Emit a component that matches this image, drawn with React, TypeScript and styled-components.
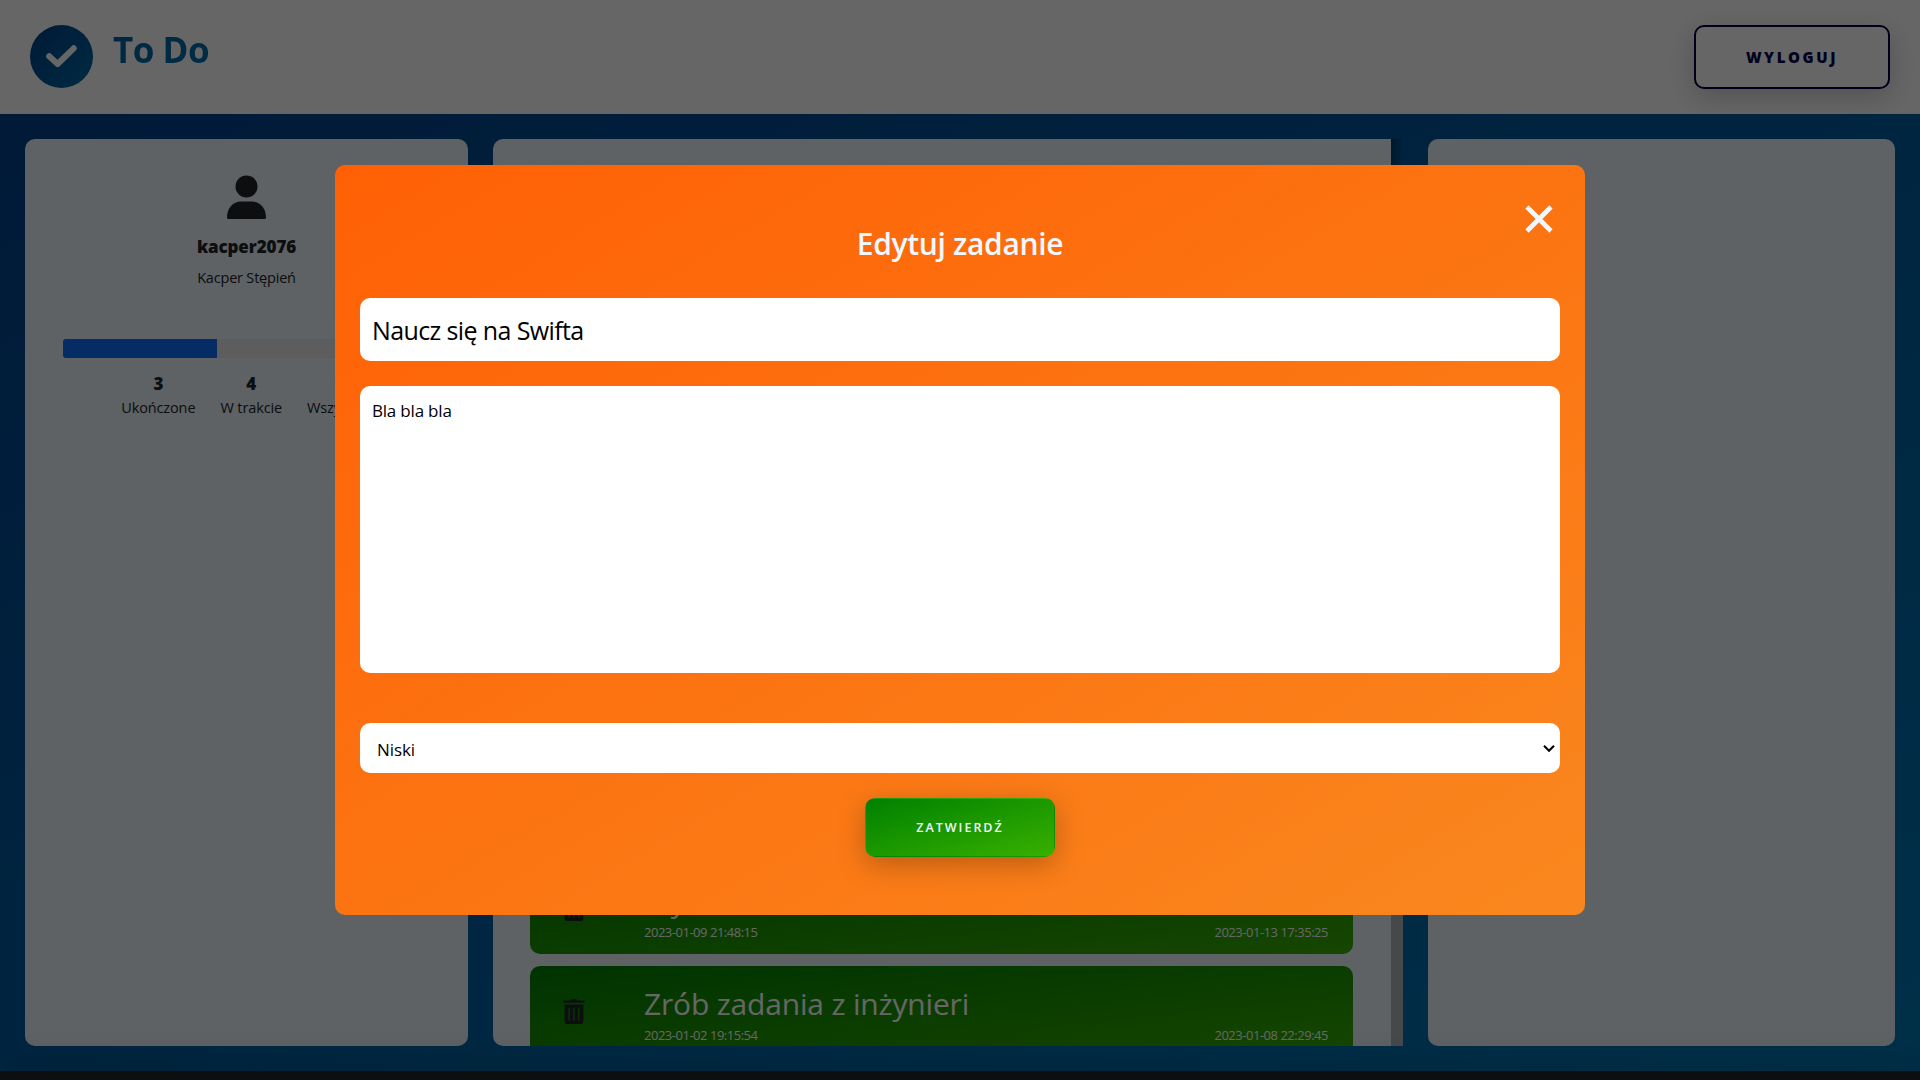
import React from 'react';
import styled, { createGlobalStyle } from 'styled-components';

const Global = createGlobalStyle`
  * { box-sizing: border-box; }
  body { margin: 0; overflow: hidden; font-family: 'Open Sans', 'Noto Sans', sans-serif; font-size: 16px; color: #212529; }
`;

const Page = styled.div`
  position: relative;
  width: 100vw;
  height: 1080px;
  display: flex;
  flex-direction: column;
  overflow: hidden;
`;

const Header = styled.header`
  display: flex;
  justify-content: space-between;
  align-items: flex-start;
  height: 114px;
  padding: 25px 30px 0;
  background: #fff;
`;

const Brand = styled.div`
  display: flex;
  align-items: flex-start;
  gap: 20px;
`;

const Title = styled.h1`
  margin: 0;
  font-size: 35px;
  line-height: 50px;
  font-weight: 700;
  letter-spacing: -0.5px;
  background: linear-gradient(to bottom right, #0060a0, #0070ae);
  background-clip: text;
  -webkit-background-clip: text;
  color: transparent;
`;

const Logout = styled.button`
  width: 196px;
  height: 64px;
  padding: 0;
  border: 2px solid #00004b;
  border-radius: 10px;
  background: #fff;
  color: #00004b;
  font: 800 15px 'Open Sans', sans-serif;
  letter-spacing: 2.6px;
  box-shadow: 0 8px 28px rgba(0, 0, 0, 0.2);
`;

const Board = styled.main`
  display: flex;
  gap: 25px;
  height: 957px;
  padding: 25px;
  background: linear-gradient(to bottom right, #00428c, #0077b6);
`;

const Panel = styled.section<{ $w: number }>`
  width: ${p => p.$w}px;
  height: 907px;
  border-radius: 10px;
  background: #ecf4fa;
`;

const Profile = styled(Panel)`
  display: flex;
  flex-direction: column;
  align-items: center;
  padding: 36px 38px 0;
`;

const UserName = styled.div`
  margin-top: 14px;
  font-size: 17px;
  line-height: 26px;
  font-weight: 800;
  letter-spacing: -0.1px;
`;

const FullName = styled.div`
  margin-top: 6px;
  font-size: 14.5px;
  line-height: 24px;
  letter-spacing: -0.2px;
`;

const Progress = styled.div`
  width: 100%;
  height: 19px;
  margin-top: 49px;
  border-radius: 3px;
  overflow: hidden;
  background: #ebe9ec;
`;

const ProgressFill = styled.div`
  width: 154px;
  height: 100%;
  background: #0d6efd;
`;

const Stats = styled.div`
  display: flex;
  gap: 25px;
  margin-top: 13px;
`;

const Stat = styled.div`
  display: flex;
  flex-direction: column;
  align-items: center;
  font-size: 14.5px;
  line-height: 23px;
  letter-spacing: -0.12px;
  white-space: nowrap;
`;

const StatValue = styled.b`
  font-size: 17px;
  line-height: 25px;
  font-weight: 800;
`;

const Tasks = styled.section`
  display: flex;
  width: 910px;
  height: 907px;
  border-radius: 10px 0 0 10px;
  overflow: hidden;
`;

const TaskList = styled.div`
  flex: 1;
  display: flex;
  flex-direction: column;
  justify-content: flex-end;
  gap: 12px;
  padding: 0 38px 0 37px;
  background: #ecf4fa;
`;

const Scrollbar = styled.div`
  width: 12px;
  padding-top: 400px;
  background: linear-gradient(to right, rgba(0, 0, 0, 0.3), transparent);
`;

const Thumb = styled.div`
  height: 507px;
  background: #afb5ba;
`;

const Task = styled.article<{ $cut?: boolean }>`
  display: flex;
  flex: none;
  width: 823px;
  height: 91px;
  margin-bottom: ${p => (p.$cut ? '-11px' : '0')};
  padding: 18px 25px 0 33px;
  border-radius: 10px;
  background: linear-gradient(to bottom right, #008000, #38b000);
  color: #fff;
`;

const TaskIcon = styled.div`
  width: 81px;
  padding-top: 15px;

  svg { display: block; }
`;

const TaskBody = styled.div`
  flex: 1;
`;

const TaskName = styled.div`
  font-size: 30px;
  line-height: 40px;
  letter-spacing: -0.18px;
`;

const Dates = styled.div`
  display: flex;
  justify-content: space-between;
  padding-top: 1px;
  font-size: 13px;
  line-height: 21px;
  letter-spacing: -0.48px;
`;

const Footer = styled.footer`
  position: relative;
  flex: none;
  height: 9px;
  background: #212529;
  box-shadow: 0 0 35px rgba(0, 0, 0, 0.35);
`;

const Overlay = styled.div`
  position: absolute;
  inset: 0;
  display: flex;
  align-items: center;
  justify-content: center;
  background: rgba(0, 0, 0, 0.6);
`;

const Modal = styled.form`
  position: relative;
  display: flex;
  flex-direction: column;
  width: 1250px;
  height: 750px;
  padding: 56px 25px 0;
  border-radius: 10px;
  background: linear-gradient(to bottom right, #ff6005, #f9871f);
`;

const Close = styled.button`
  position: absolute;
  top: 39.5px;
  right: 32px;
  padding: 0;
  border: 0;
  line-height: 0;
  background: none;
`;

const Heading = styled.h2`
  margin: 0 0 32px;
  text-align: center;
  font-size: 30px;
  line-height: 45px;
  font-weight: 600;
  letter-spacing: -0.33px;
  color: #f0f8ff;
`;

const NameInput = styled.input`
  height: 63px;
  padding: 1px 13px 0 12px;
  border: 0;
  border-radius: 10px;
  background: #fff;
  color: #000;
  font: 400 25px 'Open Sans', sans-serif;
  letter-spacing: -0.62px;
`;

const Description = styled.textarea`
  height: 287px;
  margin-top: 25px;
  padding: 13px 12px;
  border: 0;
  border-radius: 10px;
  resize: none;
  background: #fff;
  color: #000;
  font: 400 17px/24px 'Open Sans', sans-serif;
  letter-spacing: -0.2px;
`;

const PriorityField = styled.label`
  position: relative;
  display: flex;
  height: 50px;
  margin-top: 50px;

  svg {
    position: absolute;
    right: 5px;
    top: 21px;
  }
`;

const Priority = styled.select`
  appearance: none;
  flex: 1;
  padding: 2px 0 0 17px;
  border: 0;
  border-radius: 10px;
  background: #fff;
  color: #000;
  font: 400 17px 'Open Sans', sans-serif;
  letter-spacing: -0.1px;
`;

const Submit = styled.button`
  align-self: center;
  width: 190px;
  height: 59px;
  margin-top: 25px;
  padding: 0;
  border: 1px solid transparent;
  border-radius: 10px;
  background: linear-gradient(to bottom right, #008000, #38b000);
  color: #f0f8ff;
  font: 600 12.5px 'Open Sans', sans-serif;
  letter-spacing: 2px;
  box-shadow: 0 8px 28px rgba(0, 0, 0, 0.25);
`;

const TrashIcon = () => (
  <svg width="22" height="25" viewBox="0 0 22 25">
    <path fill="#212529" fillRule="evenodd" d="M1 1.500h6.500L8.500.3h5l1 1.200H21q.6 0 .6.7v1.600H.4V2.200q0-.7.6-.7zM1.600 5.600h18.800v16.600q0 2.800-2.600 2.800H4.200q-2.600 0-2.600-2.800zM5.500 8.800v13h1.300v-13zm4.800 0v13h1.300v-13zm4.800 0v13h1.300v-13z" />
  </svg>
);

const tasks = [
  { name: 'Myć auto', from: '2023-01-09 21:48:15', to: '2023-01-13 17:35:25' },
  { name: 'Zrób zadania z inżynieri', from: '2023-01-02 19:15:54', to: '2023-01-08 22:29:45' },
];

const stats = [
  ['3', 'Ukończone'],
  ['4', 'W trakcie'],
  ['7', 'Wszystkie'],
];

export default function App() {
  return (
    <Page>
      <Global />
      <Header>
        <Brand>
          <svg width="63" height="63" viewBox="0 0 63 63">
            <defs>
              <linearGradient id="brand" x1="0" y1="0" x2="1" y2="1">
                <stop offset="0" stopColor="#003f88" />
                <stop offset="1" stopColor="#006ca8" />
              </linearGradient>
            </defs>
            <circle cx="31.5" cy="31.5" r="31.5" fill="url(#brand)" />
            <path d="M19.2 31.2 27.6 39 43.7 23.3" fill="none" stroke="#fff" strokeWidth="6" strokeLinecap="round" strokeLinejoin="round" />
          </svg>
          <Title>To Do</Title>
        </Brand>
        <Logout>WYLOGUJ</Logout>
      </Header>
      <Board>
        <Profile $w={443}>
          <svg width="39" height="45" viewBox="0 0 39 45">
            <circle cx="19.5" cy="11.5" r="11" fill="#212529" />
            <path d="M0 42.5C0 33 6 26.5 14 26.5h11c8 0 14 6.500 14 16q0 1.500-1.500 1.500h-36Q0 44 0 42.500z" fill="#212529" />
          </svg>
          <UserName>kacper2076</UserName>
          <FullName>Kacper Stępień</FullName>
          <Progress><ProgressFill /></Progress>
          <Stats>
            {stats.map(([value, label]) => (
              <Stat key={label}><StatValue>{value}</StatValue>{label}</Stat>
            ))}
          </Stats>
        </Profile>
        <Tasks>
          <TaskList>
            {tasks.map((t, i) => (
              <Task key={t.name} $cut={i === tasks.length - 1}>
                <TaskIcon><TrashIcon /></TaskIcon>
                <TaskBody>
                  <TaskName>{t.name}</TaskName>
                  <Dates><span>{t.from}</span><span>{t.to}</span></Dates>
                </TaskBody>
              </Task>
            ))}
          </TaskList>
          <Scrollbar><Thumb /></Scrollbar>
        </Tasks>
        <Panel $w={467} />
      </Board>
      <Footer />
      <Overlay>
        <Modal>
          <Close type="button" aria-label="Zamknij">
            <svg width="28" height="28" viewBox="0 0 28 28">
              <path d="M2 2 26 26M26 2 2 26" stroke="#f0f8ff" strokeWidth="4.600" />
            </svg>
          </Close>
          <Heading>Edytuj zadanie</Heading>
          <NameInput defaultValue="Naucz się na Swifta" />
          <Description defaultValue="Bla bla bla" />
          <PriorityField>
            <Priority defaultValue="Niski"><option>Niski</option></Priority>
            <svg width="12" height="9" viewBox="0 0 12 9">
              <path d="M1 1.800 6 6.800 11 1.800" fill="none" stroke="#000" strokeWidth="2" />
            </svg>
          </PriorityField>
          <Submit type="button">ZATWIERDŹ</Submit>
        </Modal>
      </Overlay>
    </Page>
  );
}
